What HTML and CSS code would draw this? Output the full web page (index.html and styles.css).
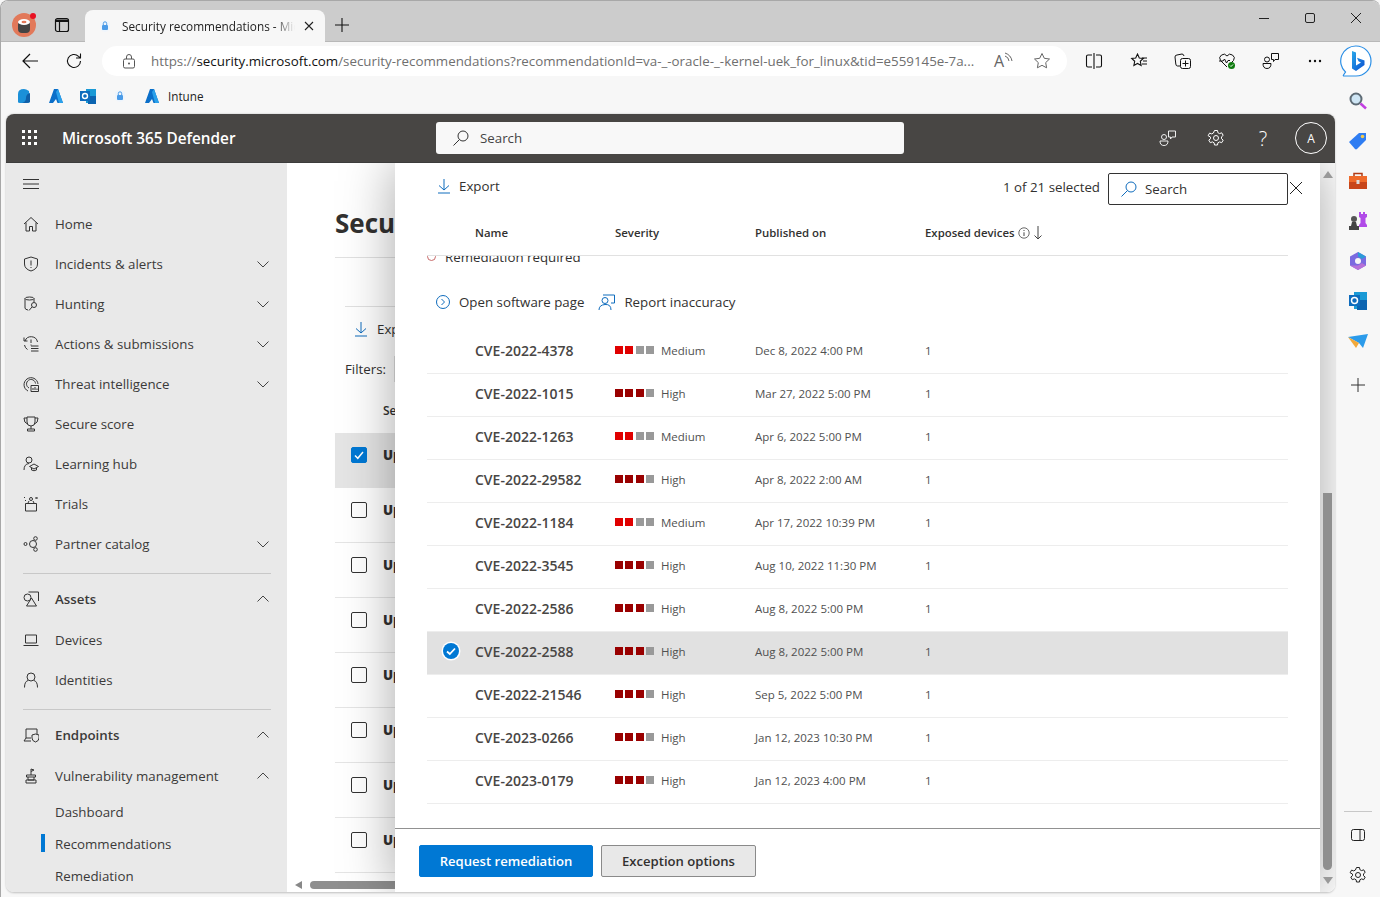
FILE: index.html
```html
<!DOCTYPE html>
<html lang="en">
<head>
<meta charset="UTF-8">
<meta name="viewport" content="width=device-width, initial-scale=1.0">
<title>Security recommendations - Microsoft 365 Defender</title>
<link rel="stylesheet" href="styles.css">
</head>
<body>
<div class="window">
  <!-- browser tabs -->
  <div class="tabstrip">
    <svg class="profile" width="26" height="26" viewBox="0 0 26 26"><circle cx="12" cy="13" r="12" fill="#e2795a"/><rect x="6" y="8" width="12" height="13" rx="4" fill="#444"/><ellipse cx="12" cy="10" rx="6" ry="3" fill="#fff"/><ellipse cx="12" cy="10" rx="2.5" ry="1.2" fill="#e2795a"/><circle cx="21" cy="4" r="3" fill="#e81123"/></svg>
    <svg class="tab-actions" width="16" height="16" viewBox="0 0 16 16"><rect x="1.5" y="1.5" width="13" height="13" rx="2" fill="none" stroke="#111" stroke-width="1.2"/><path d="M1.5 2.5h13v2.5h-13z" fill="#111"/><path d="M5.5 4v10" stroke="#111" stroke-width="1.2"/></svg>
    <div class="tab">
      <svg width="12" height="14" viewBox="0 0 12 14"><path d="M1 3l5-2 5 2v5q0 4-5 5-5-1-5-5z" fill="#eef5fc"/><rect x="3" y="6" width="6" height="5" rx="1" fill="#4a9be8"/><path d="M4.3 6V4.5a1.7 1.7 0 0 1 3.4 0V6" fill="none" stroke="#4a9be8"/></svg>
      <span class="tab-title">Security recommendations - Microsoft 365 Defender</span>
      <svg width="12" height="12" viewBox="0 0 12 12"><path d="M2 2l8 8M10 2l-8 8" stroke="#222" stroke-width="1.1"/></svg>
    </div>
    <svg class="new-tab" width="16" height="16" viewBox="0 0 16 16"><path d="M8 1v14M1 8h14" stroke="#111" stroke-width="1.1"/></svg>
    <div class="win-controls">
      <svg width="12" height="12" viewBox="0 0 12 12"><path d="M1 6.5h10" stroke="#222"/></svg>
      <svg width="12" height="12" viewBox="0 0 12 12"><rect x="1.5" y="1.5" width="9" height="9" rx="1.5" fill="none" stroke="#222"/></svg>
      <svg width="12" height="12" viewBox="0 0 12 12"><path d="M1 1l10 10M11 1L1 11" stroke="#222"/></svg>
    </div>
  </div>

  <!-- address bar -->
  <div class="toolbar">
    <svg class="tool-back" width="18" height="18" viewBox="0 0 18 18"><path d="M17 9H2M9 2L2 9l7 7" fill="none" stroke="#111" stroke-width="1.2"/></svg>
    <svg class="tool-reload" width="18" height="18" viewBox="0 0 18 18"><path d="M15.5 9a6.5 6.5 0 1 1-2-4.7L15.5 6M15.5 1.5V6H11" fill="none" stroke="#111" stroke-width="1.1"/></svg>
    <div class="addressbar">
      <svg width="14" height="16" viewBox="0 0 14 16"><rect x="1.5" y="6" width="11" height="9" rx="1.5" fill="none" stroke="#555"/><path d="M4.5 6V4a2.5 2.5 0 0 1 5 0v2" fill="none" stroke="#555"/><circle cx="7" cy="10.5" r="1" fill="#555"/></svg>
      <div class="url"><span class="url-host"><span class="url-dim">https://</span>security.microsoft.com</span><span class="url-dim">/security-recommendations?recommendationId=va-_-oracle-_-kernel-uek_for_linux&amp;tid=e559145e-7a...</span></div>
      <span class="read-aloud">A<svg width="9" height="12" viewBox="0 0 9 12"><path d="M1 1q6 2 7 8M1 4q3.500 1 4 5" fill="none" stroke="#666"/></svg></span>
      <svg width="18" height="18" viewBox="0 0 18 18"><path d="M9 1.5l2.3 4.8 5.2.7-3.8 3.6.9 5.2L9 13.3l-4.6 2.5.9-5.2L1.5 7l5.2-.7z" fill="none" stroke="#666"/></svg>
    </div>
    <div class="tool-icons">
      <svg class="tool-split" width="18" height="18" viewBox="0 0 18 18"><path d="M9 1v16M7 3H3a1.5 1.5 0 0 0-1.500 1.500v9A1.500 1.500 0 0 0 3 15h4M11 3h4a1.500 1.500 0 0 1 1.500 1.500v9A1.500 1.500 0 0 1 15 15h-4" fill="none" stroke="#111" stroke-width="1.100"/></svg>
      <svg width="18" height="18" viewBox="0 0 18 18"><path d="M7.500 2l1.800 4 4 .5-3 2.800.8 4.200-3.600-2-3.600 2 .8-4.200-3-2.800 4-.5z" fill="none" stroke="#111" stroke-width="1.100"/><path d="M12 6h5M13 9h4M12 12h5" stroke="#111"/></svg>
      <svg width="18" height="18" viewBox="0 0 18 18"><path d="M6 14H3.500Q2 14 1.800 12L1 5Q1 3 3 3l5-1q1.500 0 2 2" fill="none" stroke="#111"/><rect x="6.500" y="6.500" width="10" height="10" rx="2" fill="none" stroke="#111"/><path d="M11.500 8.500v6M8.500 11.500h6" stroke="#111"/></svg>
      <svg width="18" height="18" viewBox="0 0 18 18"><path d="M9 15L2.500 8.500A3.800 3.800 0 0 1 9 4a3.800 3.800 0 0 1 6.500 4.500L13 11" fill="none" stroke="#111"/><path d="M1 9h4l1.500-2 2 4L10 8.500h2" fill="none" stroke="#111"/><circle cx="13.500" cy="13.500" r="3.500" fill="#107c10"/><path d="M12 13.500l1 1 2-2" fill="none" stroke="#fff"/></svg>
      <svg width="18" height="18" viewBox="0 0 18 18"><circle cx="5" cy="7.500" r="2.500" fill="none" stroke="#111"/><path d="M1 11.500h8q0 5-4 5t-4-5z" fill="none" stroke="#111"/><path d="M9.500 1.500h7v6h-3.500l-1.500 2v-2h-2z" fill="none" stroke="#111"/></svg>
      <svg width="18" height="18" viewBox="0 0 18 18"><circle cx="4" cy="9" r="1.200" fill="#111"/><circle cx="9" cy="9" r="1.200" fill="#111"/><circle cx="14" cy="9" r="1.200" fill="#111"/></svg>
    </div>
    <svg class="bing" width="32" height="32" viewBox="0 0 32 32"><defs><linearGradient id="bingfill" x1="0" y1="0" x2="1" y2="1"><stop offset="0" stop-color="#28a8ea"/><stop offset="1" stop-color="#0a4fd0"/></linearGradient></defs><path d="M16 1a15 15 0 0 1 0 30H4q-1 0-.5-1l2-3A15 15 0 0 1 16 1z" fill="#fff" stroke="#2b8fe6" stroke-width="1.200"/><path d="M12 6l4 1.500v13l5-3-2.500-1.200-1.500-3.500 7.500 2.700v4.500L16 26l-4-2.500z" fill="url(#bingfill)"/></svg>
  </div>

  <div class="workspace">
    <div class="content-col">
      <!-- favorites bar -->
      <div class="favbar">
        <svg width="16" height="16" viewBox="0 0 16 16"><path d="M2 14V6q0-5 6-5 2 0 5 2l1 11q-1 1-4 1H4q-2 0-2-1z" fill="#1b90d8"/><path d="M6 15q4-1 4-5t4-5v9q-1 1-4 1z" fill="#0f5fa8"/></svg>
        <svg width="16" height="16" viewBox="0 0 16 16"><path d="M6 1h4l5 14H9.500L8 11l-3 4H1z" fill="#0b6fc9"/><path d="M8 4l3 11h4L10 1z" fill="#2aa0ea"/></svg>
        <svg width="16" height="16" viewBox="0 0 16 16"><rect x="6" y="1" width="10" height="14" fill="#1a9ad6"/><rect x="8" y="8" width="8" height="8" fill="#0c64b0"/><rect x="0" y="3" width="10" height="10" fill="#0f6cbd"/><circle cx="5" cy="8" r="2.500" fill="none" stroke="#fff" stroke-width="1.400"/></svg>
        <svg class="fav-lock" width="12" height="14" viewBox="0 0 12 14"><path d="M1 3l5-2 5 2v5q0 4-5 5-5-1-5-5z" fill="#eef5fc"/><rect x="3" y="6" width="6" height="5" rx="1" fill="#4a9be8"/><path d="M4.300 6V4.500a1.700 1.700 0 0 1 3.400 0V6" fill="none" stroke="#4a9be8"/></svg>
        <span class="fav-link">
          <svg width="16" height="16" viewBox="0 0 16 16"><path d="M6 1h4l5 14H9.500L8 11l-3 4H1z" fill="#0b6fc9"/><path d="M8 4l3 11h4L10 1z" fill="#2aa0ea"/></svg>
          Intune
        </span>
      </div>

      <div class="app">
        <header class="app-header">
          <svg class="waffle" width="16" height="16" viewBox="0 0 16 16" fill="#fff"><rect x="0" y="0" width="3" height="3"/><rect x="6" y="0" width="3" height="3"/><rect x="12" y="0" width="3" height="3"/><rect x="0" y="6" width="3" height="3"/><rect x="6" y="6" width="3" height="3"/><rect x="12" y="6" width="3" height="3"/><rect x="0" y="12" width="3" height="3"/><rect x="6" y="12" width="3" height="3"/><rect x="12" y="12" width="3" height="3"/></svg>
          <span class="app-name">Microsoft 365 Defender</span>
          <div class="global-search">
            <svg width="18" height="18" viewBox="0 0 18 18"><circle cx="11" cy="7" r="5" fill="none" stroke="#333"/><path d="M7.500 10.500L1.500 16.500" stroke="#333"/></svg>
            <span>Search</span>
          </div>
          <div class="header-icons">
            <svg width="18" height="18" viewBox="0 0 18 18"><circle cx="5" cy="8" r="2.500" fill="none" stroke="#eee"/><path d="M1 12h8q0 4.500-4 4.500T1 12z" fill="none" stroke="#eee"/><path d="M9.500 2h7v6H13l-1.500 2V8h-2z" fill="none" stroke="#eee"/></svg>
            <svg width="18" height="18" viewBox="0 0 18 18"><circle cx="9" cy="9" r="2.500" fill="none" stroke="#fff"/><path d="M7.500 1.500h3l.4 2.200 1.700.9 2.100-.8 1.500 2.600-1.700 1.400v1.900l1.700 1.400-1.500 2.600-2.100-.8-1.700.9-.4 2.200h-3l-.4-2.200-1.700-.9-2.100.8-1.500-2.600 1.700-1.400V8.100L1.100 6.700l1.500-2.600 2.100.8 1.700-.9z" fill="none" stroke="#fff"/></svg>
            <span class="help">?</span>
            <span class="avatar">A</span>
          </div>
        </header>

        <div class="app-body">
          <nav class="sidebar">
            <div class="nav-burger">
              <svg width="16" height="10" viewBox="0 0 16 10"><path d="M0 .5h16M0 5h16M0 9.500h16" stroke="#333"/></svg>
            </div>
            <a class="nav-item">
              <svg class="nav-ico" viewBox="0 0 16 16"><path d="M1 8l7-6.500L15 8M3 6.500V15h3.500v-4.500h3V15H13V6.500"/></svg>
              <span>Home</span>
            </a>
            <a class="nav-item">
              <svg class="nav-ico" viewBox="0 0 16 16"><path d="M8 1l6.500 2v5q0 5-6.500 7-6.500-2-6.500-7V3zM8 4.500v5M8 11v1"/></svg>
              <span>Incidents &amp; alerts</span>
              <svg class="chevron" viewBox="0 0 12 8"><path d="M.5 1.500L6 7l5.500-5.500"/></svg>
            </a>
            <a class="nav-item">
              <svg class="nav-ico" viewBox="0 0 16 16"><ellipse cx="6.500" cy="2.500" rx="4.500" ry="1.500"/><path d="M2 2.500V12q0 1.500 3 2M11 2.500V6"/><circle cx="11" cy="9" r="2.500"/><path d="M9 11l-3 3.500"/></svg>
              <span>Hunting</span>
              <svg class="chevron" viewBox="0 0 12 8"><path d="M.5 1.500L6 7l5.500-5.500"/></svg>
            </a>
            <a class="nav-item">
              <svg class="nav-ico" viewBox="0 0 16 16"><path d="M2 5a6.500 6.500 0 0 1 12.500 1M1 1.500V5h3.500M1.500 9q.5 3 3 4.500M8 3.500V7M8 8.500v1M8 10h7.500M8 12.500h7.500M8 15h7.500"/></svg>
              <span>Actions &amp; submissions</span>
              <svg class="chevron" viewBox="0 0 12 8"><path d="M.5 1.500L6 7l5.500-5.500"/></svg>
            </a>
            <a class="nav-item">
              <svg class="nav-ico" viewBox="0 0 16 16"><path d="M5 15a7 7 0 1 1 10-7M6 12a4.500 4.500 0 1 1 6.500-4.500"/><path d="M8 9.500h7.500v6H8zM10 14v-2M12 14v-3M14 14v-1.500"/></svg>
              <span>Threat intelligence</span>
              <svg class="chevron" viewBox="0 0 12 8"><path d="M.5 1.500L6 7l5.500-5.500"/></svg>
            </a>
            <a class="nav-item">
              <svg class="nav-ico" viewBox="0 0 16 16"><path d="M4 1h8v5a4 4 0 0 1-8 0zM4 2H1q0 5 3.500 6M12 2h3q0 5-3.500 6M8 10v3M4.500 13h7v2h-7z"/></svg>
              <span>Secure score</span>
            </a>
            <a class="nav-item">
              <svg class="nav-ico" viewBox="0 0 16 16"><circle cx="6" cy="4" r="3"/><path d="M1 14q0-6 5-6.500"/><path d="M6.500 10.500L11 8l4.500 2.500L11 13zM8.500 12v2q2.500 1.500 5 0v-2"/></svg>
              <span>Learning hub</span>
            </a>
            <a class="nav-item">
              <svg class="nav-ico" viewBox="0 0 16 16"><path d="M2.500 7.500h11V15h-11zM1 1.500h1M2 4.500h1M13.500 1l1 1-1 1-1-1zM5 7l1-2M11 7l-1-2"/><circle cx="8" cy="3" r="1.500"/></svg>
              <span>Trials</span>
            </a>
            <a class="nav-item">
              <svg class="nav-ico" viewBox="0 0 16 16"><circle cx="2.500" cy="8" r="1.500"/><circle cx="10" cy="8" r="3.500"/><circle cx="12.500" cy="2.500" r="1.800"/><circle cx="12.500" cy="13.500" r="1.800"/></svg>
              <span>Partner catalog</span>
              <svg class="chevron" viewBox="0 0 12 8"><path d="M.5 1.500L6 7l5.500-5.500"/></svg>
            </a>
            <div class="nav-divider nav-divider-first"></div>
            <a class="nav-item nav-group">
              <svg class="nav-ico" viewBox="0 0 16 16"><circle cx="4.500" cy="6.500" r="3.500"/><path d="M5.500 1h10v9M8.500 7l5 8h-10z"/></svg>
              <span>Assets</span>
              <svg class="chevron" viewBox="0 0 12 8"><path d="M.5 6.500L6 1l5.500 5.500"/></svg>
            </a>
            <a class="nav-item">
              <svg class="nav-ico" viewBox="0 0 16 16"><path d="M2.500 3h11v8h-11zM.5 13.500h15"/></svg>
              <span>Devices</span>
            </a>
            <a class="nav-item">
              <svg class="nav-ico" viewBox="0 0 16 16"><circle cx="8" cy="5" r="4"/><path d="M1.500 15.500q0-6 3.500-7M14.500 15.500q0-6-3.500-7"/></svg>
              <span>Identities</span>
            </a>
            <div class="nav-divider"></div>
            <a class="nav-item nav-group">
              <svg class="nav-ico" viewBox="0 0 16 16"><path d="M8 11H3V2h11v5M3 11l-2 3h7"/><path d="M9 8l3.500-1L16 8v3q0 3-3.500 4Q9 14 9 11z"/></svg>
              <span>Endpoints</span>
              <svg class="chevron" viewBox="0 0 12 8"><path d="M.5 6.500L6 1l5.500 5.500"/></svg>
            </a>
            <a class="nav-item">
              <svg class="nav-ico" viewBox="0 0 16 16"><path d="M8 7V1l3 1-3 1.500M3.500 7h9v2h-9zM5 9v3h6V9M3 12h10v3H3z"/></svg>
              <span>Vulnerability management</span>
              <svg class="chevron" viewBox="0 0 12 8"><path d="M.5 6.500L6 1l5.500 5.500"/></svg>
            </a>
            <a class="nav-sub">Dashboard</a>
            <a class="nav-sub nav-sub-active">Recommendations</a>
            <a class="nav-sub">Remediation</a>
          </nav>

          <main class="main">
            <!-- page behind the flyout -->
            <div class="page">
              <h1 class="page-title">Security recommendations</h1>
              <div class="page-inner">
                <div class="page-tools">
                  <svg width="14" height="16" viewBox="0 0 14 16"><path d="M7 1v11M2 7.500L7 12l5-4.500M1 15h12" fill="none" stroke="#0f6cbd"/></svg>
                  <span>Export</span>
                </div>
                <div class="page-filters"><span>Filters:</span><i class="filter-box"></i></div>
                <div class="page-thead">Severity</div>
              </div>
              <div class="page-row page-row-on"><span class="box box-on"><svg width="12" height="12" viewBox="0 0 12 12"><path d="M2 6.500l2.800 2.800L10 3" fill="none" stroke="#fff" stroke-width="1.500"/></svg></span><b>Update</b></div>
              <div class="page-row"><span class="box"></span><b>Update</b></div>
              <div class="page-row"><span class="box"></span><b>Update</b></div>
              <div class="page-row"><span class="box"></span><b>Update</b></div>
              <div class="page-row"><span class="box"></span><b>Update</b></div>
              <div class="page-row"><span class="box"></span><b>Update</b></div>
              <div class="page-row"><span class="box"></span><b>Update</b></div>
              <div class="page-row"><span class="box"></span><b>Update</b></div>
            </div>
            <div class="page-scroll">
              <i class="arrow-left"></i>
              <i class="page-thumb"></i>
            </div>

            <!-- flyout -->
            <section class="panel">
              <div class="panel-tools">
                <span class="panel-export">
                  <svg width="14" height="16" viewBox="0 0 14 16"><path d="M7 1v11M2 7.500L7 12l5-4.500M1 15h12" fill="none" stroke="#0f6cbd"/></svg>
                  Export
                </span>
                <span class="selected-count">1 of 21 selected</span>
                <div class="panel-search">
                  <svg width="18" height="18" viewBox="0 0 18 18"><circle cx="11" cy="7" r="5" fill="none" stroke="#0f6cbd"/><path d="M7.500 10.500L1.500 16.500" stroke="#0f6cbd"/></svg>
                  <span>Search</span>
                </div>
                <svg class="panel-close" width="14" height="14" viewBox="0 0 14 14"><path d="M1 1l12 12M13 1L1 13" stroke="#222"/></svg>
              </div>

              <div class="cve-row cve-head">
                <span></span>
                <span>Name</span>
                <span>Severity</span>
                <span>Published on</span>
                <span class="exposed">Exposed devices
                  <svg width="12" height="12" viewBox="0 0 12 12"><circle cx="6" cy="6" r="5.200" fill="none" stroke="#444" stroke-width=".8"/><path d="M6 5.300V9M6 3v1" stroke="#444"/></svg>
                  <svg class="sort" width="8" height="14" viewBox="0 0 8 14"><path d="M4 0v13M.5 9.500L4 13l3.500-3.500" fill="none" stroke="#444"/></svg>
                </span>
              </div>

              <div class="panel-body">
                <div class="status-line"><i class="status-dot"></i>Remediation required</div>
                <div class="panel-actions">
                  <span class="panel-action">
                    <svg width="16" height="16" viewBox="0 0 16 16"><circle cx="8" cy="8" r="6.500" fill="none" stroke="#0f6cbd"/><path d="M6.500 5l3 3-3 3" fill="none" stroke="#0f6cbd"/></svg>
                    Open software page
                  </span>
                  <span class="panel-action">
                    <svg width="18" height="18" viewBox="0 0 18 18"><circle cx="7" cy="7.500" r="3" fill="none" stroke="#0f6cbd"/><path d="M1 17q0-5 6-5.500t6 5.500M5 2h11.500v8H13" fill="none" stroke="#0f6cbd"/></svg>
                    Report inaccuracy
                  </span>
                </div>

                <div class="cve-row"><span></span><b>CVE-2022-4378</b><span class="sev"><span class="bars bars-medium"><i></i><i></i><i></i><i></i></span>Medium</span><span>Dec 8, 2022 4:00 PM</span><span>1</span></div>
                <div class="cve-row"><span></span><b>CVE-2022-1015</b><span class="sev"><span class="bars bars-high"><i></i><i></i><i></i><i></i></span>High</span><span>Mar 27, 2022 5:00 PM</span><span>1</span></div>
                <div class="cve-row"><span></span><b>CVE-2022-1263</b><span class="sev"><span class="bars bars-medium"><i></i><i></i><i></i><i></i></span>Medium</span><span>Apr 6, 2022 5:00 PM</span><span>1</span></div>
                <div class="cve-row"><span></span><b>CVE-2022-29582</b><span class="sev"><span class="bars bars-high"><i></i><i></i><i></i><i></i></span>High</span><span>Apr 8, 2022 2:00 AM</span><span>1</span></div>
                <div class="cve-row"><span></span><b>CVE-2022-1184</b><span class="sev"><span class="bars bars-medium"><i></i><i></i><i></i><i></i></span>Medium</span><span>Apr 17, 2022 10:39 PM</span><span>1</span></div>
                <div class="cve-row"><span></span><b>CVE-2022-3545</b><span class="sev"><span class="bars bars-high"><i></i><i></i><i></i><i></i></span>High</span><span>Aug 10, 2022 11:30 PM</span><span>1</span></div>
                <div class="cve-row"><span></span><b>CVE-2022-2586</b><span class="sev"><span class="bars bars-high"><i></i><i></i><i></i><i></i></span>High</span><span>Aug 8, 2022 5:00 PM</span><span>1</span></div>
                <div class="cve-row cve-selected"><span class="cve-check"><svg width="20" height="20" viewBox="0 0 20 20"><circle cx="10" cy="10" r="9.500" fill="#fff"/><circle cx="10" cy="10" r="8" fill="#0078d4"/><path d="M6 10.500l2.800 2.500L14 7.500" fill="none" stroke="#fff" stroke-width="1.800"/></svg></span><b>CVE-2022-2588</b><span class="sev"><span class="bars bars-high"><i></i><i></i><i></i><i></i></span>High</span><span>Aug 8, 2022 5:00 PM</span><span>1</span></div>
                <div class="cve-row"><span></span><b>CVE-2022-21546</b><span class="sev"><span class="bars bars-high"><i></i><i></i><i></i><i></i></span>High</span><span>Sep 5, 2022 5:00 PM</span><span>1</span></div>
                <div class="cve-row"><span></span><b>CVE-2023-0266</b><span class="sev"><span class="bars bars-high"><i></i><i></i><i></i><i></i></span>High</span><span>Jan 12, 2023 10:30 PM</span><span>1</span></div>
                <div class="cve-row"><span></span><b>CVE-2023-0179</b><span class="sev"><span class="bars bars-high"><i></i><i></i><i></i><i></i></span>High</span><span>Jan 12, 2023 4:00 PM</span><span>1</span></div>
              </div>

              <div class="panel-footer">
                <button class="btn btn-primary">Request remediation</button>
                <button class="btn">Exception options</button>
              </div>
            </section>

            <div class="vscroll">
              <i class="arrow-up"></i>
              <i class="vthumb"></i>
              <i class="arrow-down"></i>
            </div>
          </main>
        </div>
      </div>
    </div>

    <!-- edge sidebar -->
    <aside class="edge-rail">
      <div class="rail-top">
        <svg width="20" height="20" viewBox="0 0 20 20"><circle cx="8" cy="8" r="5.500" fill="#cfe6f5" stroke="#5e6b75" stroke-width="2"/><path d="M12.500 12.500L18 17.500" stroke="#c13fe0" stroke-width="2.500"/></svg>
        <svg width="20" height="20" viewBox="0 0 20 20"><path d="M1 11L11 2h7v7l-9 9a1.500 1.500 0 0 1-2 0z" fill="#2f7df2"/><circle cx="14.500" cy="5.500" r="1.800" fill="#f3c94a"/></svg>
        <svg width="20" height="20" viewBox="0 0 20 18"><path d="M6 4V1.500h8V4" fill="none" stroke="#b23a13" stroke-width="1.500"/><rect x="1" y="4" width="18" height="6" fill="#ef6a2a"/><rect x="1" y="10" width="18" height="7" fill="#c8461a"/><rect x="8.500" y="8" width="3" height="4" fill="#ddd"/></svg>
        <svg width="20" height="20" viewBox="0 0 20 20"><path d="M11 1h2v2h2V1h2v2h2v3l-1.500 1v5l1.500 2v2h-8v-2l1.500-2V7L11 6z" fill="#b14be8"/><circle cx="6" cy="8" r="3" fill="#555"/><path d="M4 11h4l1 4h2v4H1v-4h2z" fill="#444"/></svg>
        <svg width="20" height="20" viewBox="0 0 20 20"><path d="M10 1l8 4.500v9L10 19l-8-4.500v-9z" fill="#7b6be0"/><path d="M10 1l8 4.500-4 2.500-4-2.500z" fill="#2b9bd8"/><path d="M2 14.500L10 19l8-4.500-4-2.500-4 2.500z" fill="#b772d8"/><circle cx="10" cy="10" r="3" fill="#f7f7f7"/></svg>
        <svg width="20" height="20" viewBox="0 0 20 18"><rect x="6" y="0" width="13" height="17" fill="#1a9ad6"/><rect x="9" y="8" width="10" height="10" fill="#0c64b0"/><rect x="1" y="3" width="11" height="11" fill="#0f6cbd"/><circle cx="6.500" cy="8.500" r="3" fill="none" stroke="#fff" stroke-width="1.500"/></svg>
        <svg width="20" height="20" viewBox="0 0 20 16"><path d="M0 4l20-3-5 14-4-5z" fill="#2b9bea"/><path d="M0 4l11 6-3 5z" fill="#f2a93b"/></svg>
        <svg class="rail-plus" width="14" height="14" viewBox="0 0 14 14"><path d="M7 0v14M0 7h14" stroke="#333"/></svg>
      </div>
      <div class="rail-bottom">
        <i class="rail-divider"></i>
        <svg class="rail-pane" width="14" height="14" viewBox="0 0 14 14"><rect x=".5" y="1.500" width="13" height="11" rx="2" fill="none" stroke="#222"/><path d="M9 1.500v11" stroke="#222"/></svg>
        <svg class="rail-gear" width="18" height="18" viewBox="0 0 18 18"><circle cx="9" cy="9" r="2.500" fill="none" stroke="#222"/><path d="M7.500 1.500h3l.4 2.200 1.700.9 2.100-.8 1.500 2.600-1.700 1.400v1.900l1.700 1.400-1.500 2.600-2.100-.8-1.700.9-.4 2.200h-3l-.4-2.200-1.700-.9-2.100.8-1.500-2.600 1.700-1.400V8.100L1.100 6.700l1.500-2.600 2.100.8 1.700-.9z" fill="none" stroke="#222"/></svg>
      </div>
    </aside>
  </div>
</div>
</body>
</html>
```

FILE: styles.css
```css
* {
  box-sizing: border-box;
}
html, body {
  height: 100%;
}
body {
  margin: 0;
  background: #f7f7f7;
  color: #323130;
  font-family: "Open Sans", "Noto Sans", Arial, sans-serif;
  font-size: 13.3px;
  overflow: hidden;
}
.window {
  display: flex;
  flex-direction: column;
  height: 897px;
  border-top: 1px solid #a8a8a8;
  border-left: 1px solid #a8a8a8;
  border-top-left-radius: 8px;
  border-top-right-radius: 8px;
  overflow: hidden;
}

/* tabs */
.tabstrip {
  display: flex;
  align-items: center;
  height: 41px;
  flex: none;
  padding-top: 8px;
  background: #cccccc;
  border-bottom: 1px solid #b8b8b8;
  position: relative;
}
.profile {
  margin-left: 11px;
}
.tab-actions {
  margin-left: 16px;
}
.tab {
  display: flex;
  align-items: center;
  align-self: flex-end;
  width: 240px;
  height: 32px;
  margin-left: 15px;
  margin-bottom: -1px;
  padding: 0 10px 0 14px;
  background: #f7f7f7;
  border-radius: 8px 8px 0 0;
}
.tab-title {
  flex: 1;
  margin: 0 8px 0 11px;
  font-size: 11.8px;
  white-space: nowrap;
  overflow: hidden;
  color: #222;
  -webkit-mask-image: linear-gradient(to right, #000 88%, transparent);
  mask-image: linear-gradient(to right, #000 88%, transparent);
}
.new-tab {
  margin-left: 9px;
}
.win-controls {
  display: flex;
  gap: 34px;
  margin-left: auto;
  margin-right: 18px;
  margin-top: -14px;
}

/* address bar */
.toolbar {
  display: flex;
  align-items: center;
  height: 38px;
  flex: none;
  background: #f7f7f7;
}
.tool-back {
  margin-left: 20px;
}
.tool-reload {
  margin-left: 26px;
}
.addressbar {
  display: flex;
  align-items: center;
  width: 965px;
  height: 30px;
  margin-left: 19px;
  padding: 0 16px 0 20px;
  background: #fff;
  border-radius: 15px;
}
.url {
  flex: 1;
  margin-left: 15px;
  font-size: 13.35px;
  white-space: nowrap;
  overflow: hidden;
  color: #111;
}
.url-dim {
  color: #6f6f6f;
}
.read-aloud {
  display: flex;
  margin: 0 20px 0 18px;
  color: #666;
  font-size: 16px;
  line-height: 18px;
}
.tool-icons {
  display: flex;
  gap: 26px;
  margin-left: 18px;
}
.tool-split {
  margin-right: 1px;
}
.bing {
  margin-left: 16px;
}

.workspace {
  display: flex;
  flex: 1;
  min-height: 0;
}
.content-col {
  display: flex;
  flex-direction: column;
  flex: 1;
  min-width: 0;
  padding-left: 5px;
}

/* favorites */
.favbar {
  display: flex;
  align-items: center;
  gap: 16px;
  height: 34px;
  flex: none;
  padding: 0 0 3px 10px;
  font-size: 11.7px;
  color: #222;
}
.fav-lock {
  margin: 0 2px;
}
.fav-link {
  display: flex;
  align-items: center;
  gap: 8px;
}

/* defender shell */
.app {
  display: flex;
  flex-direction: column;
  height: 779px;
  flex: none;
  border-radius: 8px;
  overflow: hidden;
  border-bottom: 1px solid #d0d0d0;
  box-shadow: 0 0 2px rgba(0, 0, 0, .25);
}
.app-header {
  display: flex;
  align-items: center;
  height: 48px;
  flex: none;
  background: #484644;
  color: #fff;
}
.waffle {
  margin-left: 16px;
}
.app-name {
  width: 374px;
  margin-left: 24px;
  font-size: 15.3px;
  font-weight: 600;
}
.global-search {
  display: flex;
  align-items: center;
  gap: 10px;
  width: 468px;
  height: 32px;
  padding-left: 16px;
  background: #f8f8f8;
  border-radius: 3px;
  color: #444;
  font-size: 13.3px;
}
.header-icons {
  display: flex;
  align-items: center;
  margin-left: auto;
  margin-right: 8px;
}
.header-icons svg {
  margin-right: 30px;
}
.help {
  width: 16px;
  margin-right: 24px;
  font-size: 20px;
  font-weight: 300;
  text-align: center;
}
.avatar {
  display: flex;
  align-items: center;
  justify-content: center;
  width: 32px;
  height: 32px;
  border: 1px solid #fff;
  border-radius: 50%;
  font-size: 12px;
}
.app-body {
  display: flex;
  flex: 1;
  min-height: 0;
  border-top: 1px solid #3c3c3c;
}

/* left nav */
.sidebar {
  width: 281px;
  flex: none;
  padding: 0 16px 0 17px;
  background: #e9e9e9;
  color: #3b3a39;
  overflow: hidden;
}
.nav-burger {
  display: flex;
  align-items: center;
  height: 41px;
}
.nav-item {
  display: flex;
  align-items: center;
  height: 40px;
}
.nav-ico {
  width: 16px;
  height: 16px;
  margin-right: 16px;
  flex: none;
  fill: none;
  stroke: #333;
  stroke-width: 1;
}
.chevron {
  width: 12px;
  height: 8px;
  margin-left: auto;
  margin-right: 2px;
  fill: none;
  stroke: #444;
}
.nav-group {
  margin-bottom: 1px;
  font-weight: 600;
}
.nav-divider {
  height: 1px;
  margin: 9px 0 5px;
  background: #c8c8c8;
}
.nav-sub {
  display: flex;
  align-items: center;
  height: 32px;
  padding-left: 32px;
  position: relative;
}
.nav-sub-active::before {
  content: "";
  position: absolute;
  left: 18px;
  top: 6px;
  width: 4px;
  height: 18px;
  background: #0078d4;
}

/* page behind the flyout */
.main {
  flex: 1;
  min-width: 0;
  position: relative;
  overflow: hidden;
  background: #fff;
}
.page {
  width: 108px;
  padding-left: 48px;
  white-space: nowrap;
  overflow: hidden;
}
.page-title {
  height: 95px;
  margin: 0;
  padding-top: 41px;
  border-bottom: 1px solid #e1e1e1;
  font-size: 26px;
  line-height: 38px;
  font-weight: 700;
}
.page-inner {
  margin-top: 48px;
  margin-left: 10px;
  padding-top: 10px;
  border-top: 1px solid #e1e1e1;
}
.page-tools {
  display: flex;
  align-items: center;
  gap: 9px;
  height: 24px;
  padding-left: 9px;
}
.page-tools svg {
  flex: none;
}
.page-filters {
  display: flex;
  align-items: center;
  gap: 8px;
  height: 28px;
  margin-top: 14px;
}
.filter-box {
  flex: none;
  width: 4px;
  height: 26px;
  background: #ddd;
}
.page-thead {
  height: 50px;
  padding: 19px 0 0 38px;
  font-size: 12px;
  font-weight: 600;
}
.page-row {
  display: flex;
  align-items: center;
  gap: 16px;
  height: 55px;
  padding: 0 0 10px 16px;
  border-bottom: 1px solid #e5e5e5;
  font-weight: 600;
}
.page-row-on {
  background: #e5e5e5;
}
.box {
  display: flex;
  align-items: center;
  justify-content: center;
  width: 16px;
  height: 16px;
  flex: none;
  border: 1px solid #333;
  border-radius: 2px;
  background: #fff;
}
.box-on {
  background: #0078d4;
  border-color: #0078d4;
}
.page-scroll {
  display: flex;
  align-items: center;
  position: absolute;
  left: 0;
  right: 0;
  bottom: 0;
  height: 14px;
  padding-left: 8px;
  background: #fff;
}
.arrow-left {
  width: 0;
  height: 0;
  border: 4px solid transparent;
  border-left: 0;
  border-right: 7px solid #888;
}
.page-thumb {
  width: 300px;
  height: 8px;
  margin-left: 8px;
  border-radius: 4px;
  background: #8f8f8f;
}

/* flyout */
.panel {
  display: flex;
  flex-direction: column;
  position: absolute;
  left: 108px;
  right: 15px;
  top: 0;
  bottom: 0;
  background: #fff;
  box-shadow: 0 0 50px rgba(0, 0, 0, .35);
}
.panel-tools {
  display: flex;
  align-items: flex-start;
  height: 50px;
  flex: none;
  padding: 10px 32px 0 42px;
}
.panel-export {
  display: flex;
  align-items: center;
  gap: 8px;
  height: 26px;
}
.panel-export svg,
.panel-action svg {
  flex: none;
}
.selected-count {
  margin-left: auto;
  margin-right: 8px;
  line-height: 28px;
}
.panel-search {
  display: flex;
  align-items: center;
  gap: 7px;
  width: 180px;
  height: 32px;
  padding-left: 11px;
  border: 1px solid #333;
  border-radius: 2px;
}
.panel-close {
  flex: none;
  margin: 8px -15px 0 1px;
}
.cve-row {
  display: grid;
  grid-template-columns: 48px 140px 140px 170px 1fr;
  align-items: center;
  height: 43px;
  margin: 0 32px;
  padding-bottom: 4px;
  border-bottom: 1px solid #ededed;
  font-size: 11.5px;
  color: #505050;
}
.cve-row b {
  font-size: 14px;
  font-weight: 600;
  color: #484644;
}
.cve-head {
  flex: none;
  padding-bottom: 3px;
  font-size: 11.4px;
  font-weight: 600;
  color: #323130;
  border-bottom: 1px solid #e1e1e1;
}
.exposed {
  display: flex;
  align-items: center;
  gap: 3px;
  white-space: nowrap;
}
.sort {
  margin-left: 1px;
}
.panel-body {
  flex: 1;
  min-height: 0;
  overflow: hidden;
}
.status-line {
  display: flex;
  align-items: center;
  gap: 9px;
  height: 18px;
  margin: -8px 0 0 32px;
}
.status-dot {
  width: 9px;
  height: 9px;
  border: 1px solid #c86a6a;
  border-radius: 50%;
  margin-top: -2px;
}
.panel-actions {
  display: flex;
  align-items: center;
  gap: 14px;
  height: 65px;
  padding: 7px 0 0 40px;
}
.panel-action {
  display: flex;
  align-items: center;
  gap: 8px;
}
.sev {
  display: flex;
  align-items: center;
  gap: 7px;
}
.bars {
  display: flex;
  gap: 2.33px;
}
.bars i {
  width: 8px;
  height: 8px;
  background: #999;
}
.bars-medium i:nth-child(-n+2) {
  background: #e00000;
}
.bars-high i:nth-child(-n+3) {
  background: #990000;
}
.cve-selected {
  background: #e1e1e1;
}
.cve-check {
  display: flex;
  padding-left: 14px;
}
.panel-footer {
  display: flex;
  align-items: flex-start;
  gap: 8px;
  height: 64px;
  flex: none;
  padding: 16px 0 0 24px;
  border-top: 1px solid #919191;
}
.btn {
  height: 32px;
  padding: 0 20px;
  border: 1px solid #8a8a8a;
  border-radius: 2px;
  background: #e8e8e8;
  color: #323130;
  font-family: inherit;
  font-size: 13.1px;
  font-weight: 600;
}
.btn-primary {
  width: 174px;
  padding: 0;
  background: #0078d4;
  border-color: #0078d4;
  color: #fff;
}
.vscroll {
  display: flex;
  flex-direction: column;
  align-items: center;
  position: absolute;
  right: 2px;
  top: 8px;
  bottom: 8px;
  width: 11px;
}
.arrow-up {
  width: 0;
  height: 0;
  border: 5px solid transparent;
  border-top: 0;
  border-bottom: 7px solid #999;
}
.vthumb {
  width: 9px;
  height: 377px;
  margin-top: auto;
  margin-bottom: 7px;
  border-radius: 0 0 5px 5px;
  background: #8f8f8f;
}
.arrow-down {
  width: 0;
  height: 0;
  border: 5px solid transparent;
  border-bottom: 0;
  border-top: 7px solid #999;
}

/* edge sidebar */
.edge-rail {
  display: flex;
  flex-direction: column;
  justify-content: space-between;
  align-items: center;
  width: 45px;
  flex: none;
  padding: 11px 0 13px;
}
.rail-top {
  display: flex;
  flex-direction: column;
  align-items: center;
  gap: 20px;
}
.rail-plus {
  margin-top: 7px;
}
.rail-bottom {
  display: flex;
  flex-direction: column;
  align-items: center;
}
.rail-divider {
  width: 28px;
  height: 1px;
  background: #c8c8c8;
}
.rail-pane {
  margin-top: 16px;
}
.rail-gear {
  margin-top: 24px;
}
```
